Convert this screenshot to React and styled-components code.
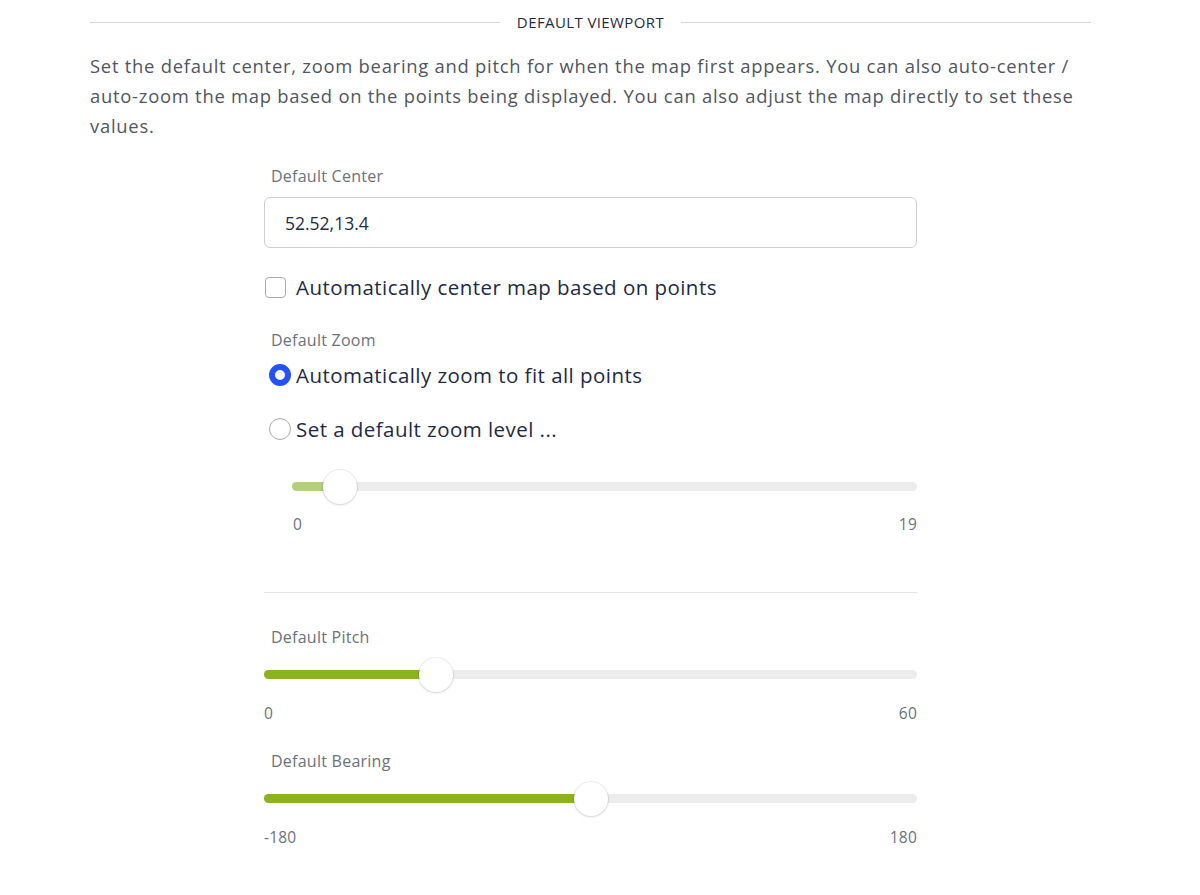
import React from "react";
import styled, { createGlobalStyle } from "styled-components";

const GlobalStyle = createGlobalStyle`
  body {
    margin: 0;
    background: #ffffff;
    font-family: "Open Sans", "Noto Sans", sans-serif;
  }
`;

const Page = styled.div`
  width: 1001px;
  margin-left: 90px;
  padding-top: 11px;
`;

const SectionHeader = styled.div`
  display: flex;
  align-items: center;
  gap: 17px;
  height: 22px;
  &::before,
  &::after {
    content: "";
    flex: 1;
    height: 1px;
    background: #d6d6d6;
  }
`;

const SectionTitle = styled.span`
  font-size: 15px;
  letter-spacing: 0.4px;
  color: #1e2a45;
  text-transform: uppercase;
`;

const Description = styled.p`
  margin: 18px 0 0;
  font-size: 18.4px;
  line-height: 30px;
  color: #50555f;
  letter-spacing: 0.75px;
`;

const Form = styled.div`
  width: 653px;
  margin: 25px 0 0 174px;
  display: flex;
  flex-direction: column;
`;

const Label = styled.div`
  padding-left: 7px;
  font-size: 16px;
  letter-spacing: 0.25px;
  color: #6c717b;
  line-height: 20px;
  margin-top: ${(p) => p.$top || 0}px;
`;

const TextInput = styled.input`
  box-sizing: border-box;
  width: 100%;
  height: 51px;
  margin-top: 11px;
  padding: 0 20px;
  border: 1px solid #cfcfcf;
  border-radius: 6px;
  font-family: inherit;
  font-size: 17.5px;
  color: #1e2a45;
  outline: none;
`;

const OptionRow = styled.label`
  display: flex;
  align-items: center;
  gap: 10px;
  height: 30px;
  margin-top: ${(p) => p.$top || 0}px;
  font-size: 20.5px;
  letter-spacing: 0.45px;
  color: #1e2a45;
`;

const CheckBox = styled.span`
  box-sizing: border-box;
  width: 21px;
  height: 21px;
  border: 1.5px solid #a9a9a9;
  border-radius: 4px;
  margin-left: 1px;
`;

const Radio = styled.span`
  box-sizing: border-box;
  width: 22px;
  height: 22px;
  border-radius: 50%;
  margin-left: 5px;
  margin-right: -5px;
  border: ${(p) => (p.$checked ? "6px solid #2452f5" : "1.5px solid #a9a9a9")};
  background: #ffffff;
`;

const SliderBlock = styled.div`
  margin-top: ${(p) => p.$top || 0}px;
  padding-left: ${(p) => p.$indent || 0}px;
`;

const Track = styled.div`
  position: relative;
  height: 9px;
  border-radius: 5px;
  background: #ececec;
  margin: 12px 0;
`;

const Fill = styled.div`
  height: 100%;
  border-radius: 5px 0 0 5px;
  background: ${(p) => p.$color};
`;

const Thumb = styled.div`
  position: absolute;
  top: 50%;
  width: 34px;
  height: 34px;
  margin-left: -17px;
  margin-top: -17px;
  border-radius: 50%;
  background: #ffffff;
  box-shadow: 0 0 0 1px rgba(0, 0, 0, 0.06), 0 1px 3px rgba(0, 0, 0, 0.12);
`;

const Range = styled.div`
  display: flex;
  justify-content: space-between;
  margin-top: ${(p) => p.$gap || 23}px;
  font-size: 15.5px;
  letter-spacing: 0.2px;
  line-height: 20px;
  color: #6c717b;
  padding-left: ${(p) => p.$pad || 0}px;
`;

const Divider = styled.hr`
  border: 0;
  height: 1px;
  background: #e3e3e3;
  margin: 58px 0 0;
`;

const Slider = ({ min, max, fill, thumb, color, indent, top, pad, gap }) => (
  <SliderBlock $top={top} $indent={indent}>
    <Track>
      <Fill $color={color} style={{ width: `${fill}%` }} />
      <Thumb style={{ left: `${thumb}%` }} />
    </Track>
    <Range $pad={pad} $gap={gap}>
      <span>{min}</span>
      <span>{max}</span>
    </Range>
  </SliderBlock>
);

export default function App() {
  return (
    <>
      <GlobalStyle />
      <Page>
        <SectionHeader>
          <SectionTitle>Default Viewport</SectionTitle>
        </SectionHeader>
        <Description>
          Set the default center, zoom bearing and pitch for when the map first
          appears. You can also auto-center / auto-zoom the map based on the
          points being displayed. You can also adjust the map directly to set
          these values.
        </Description>
        <Form>
          <Label>Default Center</Label>
          <TextInput defaultValue="52.52,13.4" />
          <OptionRow $top={24}>
            <CheckBox />
            Automatically center map based on points
          </OptionRow>
          <Label $top={28}>Default Zoom</Label>
          <OptionRow $top={10}>
            <Radio $checked />
            Automatically zoom to fit all points
          </OptionRow>
          <OptionRow $top={24}>
            <Radio />
            Set a default zoom level ...
          </OptionRow>
          <Slider
            top={26}
            indent={28}
            min="0"
            max="19"
            fill={5.3}
            thumb={7.7}
            color="#b4d07c"
            pad={1}
          />
          <Divider />
          <Label $top={34}>Default Pitch</Label>
          <Slider
            top={11}
            min="0"
            max="60"
            fill={24}
            thumb={26.3}
            color="#8ab31c"
            gap={24}
          />
          <Label $top={28}>Default Bearing</Label>
          <Slider
            top={11}
            min="-180"
            max="180"
            fill={48}
            thumb={50.1}
            color="#8ab31c"
            gap={24}
          />
        </Form>
      </Page>
    </>
  );
}
